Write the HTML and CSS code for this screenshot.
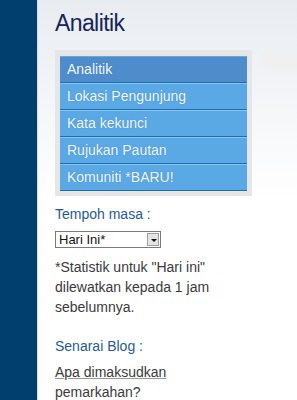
FILE: index.html
```html
<html>
	<head>
		<meta charset="UTF-8" />
		<title>Analitik</title>
		<link rel="stylesheet" href="styles.css">
	</head>
	<body>
		<div id="side"></div>
		<div id="main">
			<h1 class="title">Analitik</h1>
			<div class="row">
				<div class="menu">
					<div class="item active">Analitik</div>
					<div class="item">Lokasi Pengunjung</div>
					<div class="item">Kata kekunci</div>
					<div class="item">Rujukan Pautan</div>
					<div class="item">Komuniti *BARU!</div>
				</div>
				<div class="pill"></div>
			</div>
			<p class="label">Tempoh masa :</p>
			<div class="select">
				<span class="value">Hari Ini*</span>
				<span class="arrow"></span>
			</div>
			<p class="note">*Statistik untuk "Hari ini" dilewatkan kepada 1 jam sebelumnya.</p>
			<p class="label blog">Senarai Blog :</p>
			<p class="note link"><a href="#">Apa dimaksudkan</a> pemarkahan?</p>
		</div>
	</body>
</html>
```
FILE: styles.css
```css
body { margin: 0; display: flex; height: 100vh; overflow: hidden;
	font: 14px "Liberation Sans", Arial, sans-serif; }
#side { width: 37px; flex: none; background: #003f6e; border-right: 1px solid #d4dde8; }
#main { flex: 1; padding-left: 17px; overflow: hidden;
	background: linear-gradient(#e8ecf1, #ffffff 200px); }
.title { margin: 0; padding-top: 10px; height: 50px; box-sizing: border-box;
	font-size: 23px; font-weight: normal; letter-spacing: -0.6px; color: #15245a; }
.row { display: flex; gap: 10px; }
.menu { width: 187px; flex: none; background: #e6e6e6; padding: 6px 5px 5px; }
.item { height: 25px; line-height: 25px; padding-left: 7px; color: #f4f8fc;
	background: #5aa9e5; border-top: 1px solid #86c3ee; border-bottom: 1px solid #1e6fae;
	text-shadow: 0 0 1px #3b7fb8; }
.item.active { background: #4f8ccb; border-top-color: #6aa5dc; }
.pill { width: 80px; height: 20px; border-radius: 10px; background: #f0f0f0; flex: none; }
.label { margin: 8px 0 0; line-height: 20px; color: #1f5a96; }
.select { margin-top: 7px; width: 104px; height: 15px; border: 1px solid #7a7a7a;
	background: #fff; display: flex; justify-content: space-between; align-items: center; }
.value { font-size: 13px; color: #111; padding-left: 3px; line-height: 15px; }
.arrow { width: 12px; height: 13px; margin-right: 1px; background: #e4e4e4;
	border: 1px solid #a0a0a0; box-sizing: border-box; position: relative; }
.arrow:after { content: ""; position: absolute; left: 3px; top: 5px;
	border: 3px solid transparent; border-top: 3px solid #111; border-bottom: 0; }
.note { margin: 9px 0 0; width: 210px; line-height: 20px; color: #3a3a3a; }
.blog { margin-top: 19px; }
.link { margin-top: 6px; width: 120px; }
.link a { color: #3a3a3a; text-decoration: underline; text-decoration-color: #999; }
```
